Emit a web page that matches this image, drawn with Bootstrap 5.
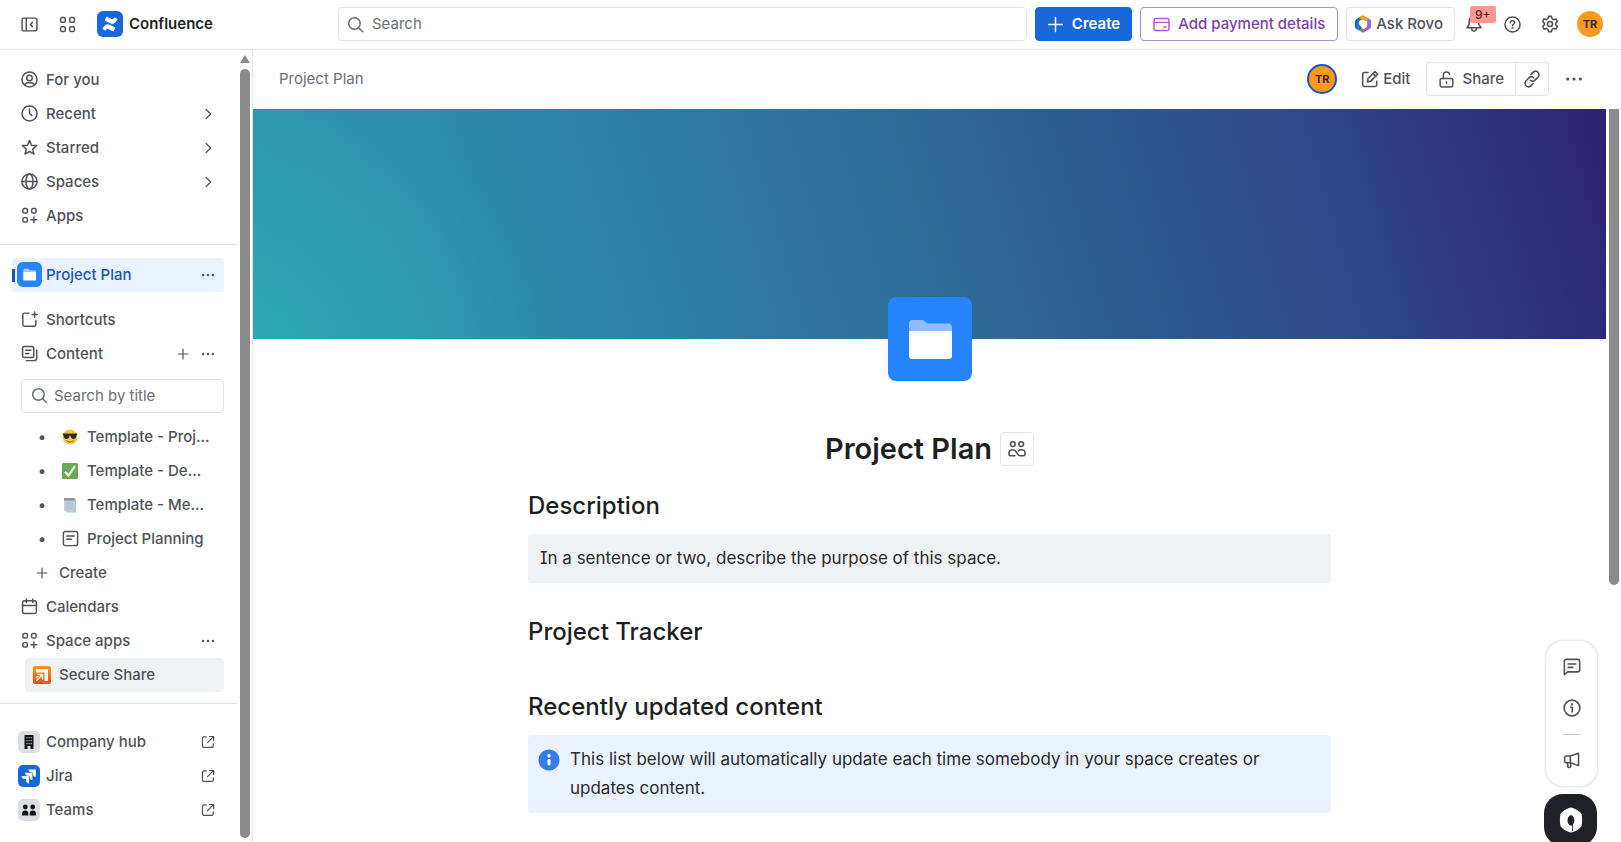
<!DOCTYPE html>
<html lang="en">
<head>
<meta charset="utf-8">
<meta name="viewport" content="width=device-width, initial-scale=1">
<title>Project Plan - Confluence</title>
<link href="https://cdn.jsdelivr.net/npm/bootstrap@5.3.0/dist/css/bootstrap.min.css" rel="stylesheet">
<style>
  :root { --ink: #292a2e; --subtle: #505258; --faint: #6b6e76; --line: #e3e4e7; --brand: #1868db; }
  body { font-family: Inter, "Liberation Sans", sans-serif; font-size: 15px; line-height: 20px; color: var(--ink); background: #fff; }
  a { color: inherit; text-decoration: none; }
  h1, h2 { color: #1e1f21; margin: 0; }
  h1 { font-size: 29px; line-height: 34px; font-weight: 600; }
  h2 { font-size: 24px; line-height: 32px; font-weight: 500; }
  .ico { width: 17px; height: 17px; flex: none; fill: none; stroke: currentColor; stroke-width: 1.4; stroke-linejoin: round; stroke-linecap: round; display: block; }
  .ico-sm { width: 14px; height: 14px; }
  .ico-xs { width: 12px; height: 12px; stroke-width: 1.6; }
  .ico-lg { width: 18px; height: 18px; }
  .tile { width: 22px; height: 22px; flex: none; display: block; }
  .plain-btn { border: 0; background: none; padding: 0; color: var(--subtle); display: inline-flex; align-items: center; justify-content: center; }

  .topbar { height: 50px; border-bottom: 1px solid var(--line); padding: 0 18px 0 21px; }
  .topbar-start { width: 317px; flex: none; }
  .topbar-icon { margin-right: 21px; }
  .brand-link { gap: 6px; color: #1e1f21; }
  .find { border: 1px solid var(--line); border-radius: 4px; height: 34px; color: var(--faint); }
  .find input { border: 0; outline: 0; background: none; min-width: 0; width: 100%; color: var(--ink); padding: 0; }
  .find input::placeholder { color: var(--faint); opacity: 1; }
  .tool-btn { height: 34px; border-radius: 4px; border: 1px solid var(--line); background: #fff; color: var(--subtle); font-weight: 500; font-size: 15px; line-height: 20px; padding: 0 12px; display: inline-flex; align-items: center; gap: 8px; white-space: nowrap; }
  .tool-btn:hover { background: #f4f5f7; }
  .create-btn, .create-btn:hover { background: var(--brand); border-color: var(--brand); color: #fff; padding: 0 11px; }
  .pay-btn { border-color: #b68bd0; color: #803fa5; }
  .pay-btn .ico { color: #af59e1; }
  .rovo-btn { padding: 0 11px 0 8px; gap: 5px; }
  .round-btn { width: 38px; height: 34px; }
  .person { border-radius: 50%; background: #fd9a1e; color: #292a2e; font-weight: 700; font-size: 11px; width: 26px; height: 26px; }
  .person-ring { width: 30px; height: 30px; border: 2px solid #1558bc; }
  .count { position: absolute; left: 15px; top: -1px; background: #fd9891; color: #5d1f1a; font-size: 12px; line-height: 17px; padding: 0 5px; border-radius: 2px; font-weight: 500; }

  .shell { height: 100vh; overflow: hidden; }
  .side { width: 253px; flex: none; border-right: 1px solid var(--line); }
  .side-list { padding: 13px 0 0; }
  .side-row { margin: 0 13px 0 12px; height: 34px; border-radius: 4px; color: var(--subtle); font-weight: 500; display: flex; align-items: center; padding-right: 4px; }
  .side-row > a { flex: 1; min-width: 0; height: 34px; display: flex; align-items: center; white-space: nowrap; }
  .child-row { margin-left: 25px; }
  .slot { width: 34px; flex: none; display: flex; justify-content: center; }
  .slot-sm { width: 22px; margin-right: 6px; flex: none; display: flex; justify-content: center; }
  .act { width: 25px; height: 25px; }
  .rule { height: 1px; background: var(--line); margin: 11px 0 13px; }
  .side-group { margin-top: 11px; }
  .current-row { position: relative; background: #e9f2fe; color: #1558bc; }
  .current-row::before { content: ""; position: absolute; left: 0; top: 11px; width: 3px; height: 13px; background: #1558bc; }
  .hover-row { background: #f0f1f2; }
  .side-find { margin: 8px 13px 7px 21px; padding: 0 8px 0 9px; gap: 6px; }

  .track { width: 15px; flex: none; display: flex; flex-direction: column; align-items: center; }
  .arrow-up { border: 5px solid transparent; border-top: 0; border-bottom: 8px solid #8b8b8b; margin: 5px 0 6px; }
  .thumb { width: 10px; border-radius: 5px; background: #8b8b8b; }
  .side-thumb { flex: 1; margin-bottom: 4px; }
  .main-thumb { height: 65%; border-radius: 0 0 5px 5px; }

  .subbar { height: 59px; padding: 0 38px 0 26px; color: var(--faint); }
  .share-main { border-radius: 4px 0 0 4px; padding: 0 11px; gap: 7px; }
  .share-link { border-radius: 0 4px 4px 0; border-left: 0; padding: 0 7px; }
  .hero { height: 230px; background: radial-gradient(ellipse 22% 105% at 0% 100%, rgba(45,172,184,.75) 0%, rgba(45,172,184,0) 100%), linear-gradient(74deg, #2d99b0 0%, #2e8fad 14%, #2c7da5 33%, #306b98 50%, #2c5d91 61%, #2f4a88 77%, #2f3480 90%, #2f2272 100%); }
  .space-icon { width: 84px; height: 84px; margin-top: -42px; }
  .page-col { max-width: 803px; margin: 0 auto; }
  .title-row { margin: 51px 0 24px; }
  .team-btn { width: 34px; height: 34px; border: 1px solid var(--line); border-radius: 4px; background: #fff; }
  .note { background: #f0f1f2; border-radius: 4px; margin: 12px 0 33px; padding: 10px 12px; font-size: 17px; line-height: 29px; font-feature-settings: "cv08"; }
  .note-info { background: #e9f2fe; gap: 10px; padding: 10px; }
  .gap-tracker { margin-bottom: 43px; }
  .dock { position: absolute; right: 24px; bottom: -4px; gap: 8px; }
  .dock-card { width: 51px; height: 145px; border-radius: 17px; background: #fff; box-shadow: 0 0 3px rgba(30,31,33,.28); padding: 5px 0; color: var(--subtle); }
  .dock-card .plain-btn { width: 40px; height: 42px; }
  .dock-rule { width: 17px; height: 1px; background: #c8cacf; margin: 5px 0; }
  .chat-btn { width: 53px; height: 52px; border-radius: 19px; background: #1f2126; border: 0; padding: 0; }
</style>
</head>
<body>
<svg class="d-none" aria-hidden="true">
  <symbol id="i-panel" viewBox="0 0 16 16"><rect x="1" y="2" width="14" height="12" rx="1.5"/><path d="M5 2v12M10.7 6 8.8 8l1.9 2"/></symbol>
  <symbol id="i-grid" viewBox="0 0 16 16"><rect x="1.5" y="1.5" width="4.4" height="4.4" rx="1.2"/><rect x="10.1" y="1.5" width="4.4" height="4.4" rx="1.2"/><rect x="1.5" y="10.1" width="4.4" height="4.4" rx="1.2"/><rect x="10.1" y="10.1" width="4.4" height="4.4" rx="1.2"/></symbol>
  <symbol id="i-apps" viewBox="0 0 16 16"><rect x="1.8" y="1.5" width="4.2" height="4.2" rx="1.2"/><rect x="10" y="1.5" width="4.2" height="4.2" rx="1.2"/><rect x="1.8" y="10" width="4.2" height="4.2" rx="1.2"/><path d="M12.1 9.3v5.6M9.3 12.1h5.6"/></symbol>
  <symbol id="i-search" viewBox="0 0 16 16"><circle cx="7" cy="7" r="5.4"/><path d="m11 11 3.800 3.800"/></symbol>
  <symbol id="i-plus" viewBox="0 0 16 16"><path d="M8 1.500v13M1.500 8h13"/></symbol>
  <symbol id="i-card" viewBox="0 0 16 16"><rect x="1" y="2.300" width="14" height="11.400" rx="1.600"/><path d="M1 6h14M10 10.400h2.300"/></symbol>
  <symbol id="i-bell" viewBox="0 0 16 16"><path d="M8 1.300c-2.600 0-4.300 1.900-4.300 4.300v2.700L1.700 11.400h12.600l-2-3.100V5.600C12.300 3.200 10.600 1.300 8 1.300ZM5.900 12c.2 1.400 1 2.300 2.100 2.300s1.900-.9 2.100-2.300"/></symbol>
  <symbol id="i-help" viewBox="0 0 16 16"><circle cx="8" cy="8" r="7.100"/><path d="M6 6.400C6 5.200 6.900 4.500 8 4.500s2 .7 2 1.800c0 1.300-2 1.500-2 2.900"/><circle cx="8" cy="11.400" r=".3"/></symbol>
  <symbol id="i-gear" viewBox="0 0 16 16"><circle cx="8" cy="8" r="2.200"/><path d="m6.700 1.200-.5 2-1.500.9-2-.6-1.300 2.300L2.900 7.200v1.600l-1.500 1.400 1.300 2.300 2-.6 1.500.9.500 2h2.600l.5-2 1.500-.9 2 .6 1.300-2.300-1.500-1.400V7.200l1.500-1.400-1.300-2.300-2 .6-1.500-.9-.5-2Z"/></symbol>
  <symbol id="i-user" viewBox="0 0 16 16"><circle cx="8" cy="8" r="7.100"/><circle cx="8" cy="6.500" r="2.600"/><path d="M3.500 13.200c.5-1.600 1.600-2.200 3-2.200h3c1.400 0 2.500.6 3 2.200"/></symbol>
  <symbol id="i-clock" viewBox="0 0 16 16"><circle cx="8" cy="8" r="7.100"/><path d="M8 3.800V8l2.300 2"/></symbol>
  <symbol id="i-star" viewBox="0 0 16 16"><path d="m8 1.300 1.800 4.500 4.900.4-3.700 3.200 1.200 4.800L8 11.600l-4.200 2.600L5 9.400 1.300 6.200l4.900-.4Z"/></symbol>
  <symbol id="i-globe" viewBox="0 0 16 16"><circle cx="8" cy="8" r="7.100"/><ellipse cx="8" cy="8" rx="3.300" ry="7.100"/><path d="M1 8h14"/></symbol>
  <symbol id="i-chev" viewBox="0 0 16 16"><path d="m5.500 2 6 6-6 6"/></symbol>
  <symbol id="i-dots" viewBox="0 0 16 16"><g fill="currentColor" stroke="none"><circle cx="2.400" cy="8" r="1.400"/><circle cx="8" cy="8" r="1.400"/><circle cx="13.600" cy="8" r="1.400"/></g></symbol>
  <symbol id="i-shortcut" viewBox="0 0 16 16"><path d="M7.500 2H3.200C2.300 2 1.700 2.600 1.700 3.500v9.300c0 .9.600 1.500 1.500 1.500h9.300c.9 0 1.500-.6 1.500-1.500V9M12.800.9v5M10.300 3.400h5"/></symbol>
  <symbol id="i-content" viewBox="0 0 16 16"><rect x="1.500" y="1.300" width="10.500" height="10.500" rx="1.500"/><path d="M4.300 5h5M4.300 8h3M14.800 4.800v7.500c0 1.400-1 2.400-2.400 2.400H5"/></symbol>
  <symbol id="i-page" viewBox="0 0 16 16"><rect x="1.300" y="1.300" width="13.400" height="13.400" rx="1.800"/><path d="M4.500 5.600h7M4.500 8.800h4.300"/></symbol>
  <symbol id="i-cal" viewBox="0 0 16 16"><rect x="1.500" y="2.600" width="13" height="12" rx="1.600"/><path d="M1.500 7h13M5 .9v3.400M11 .9v3.400"/></symbol>
  <symbol id="i-out" viewBox="0 0 16 16"><path d="M6 2.200H3.200c-.9 0-1.500.6-1.500 1.500v9c0 .9.600 1.500 1.500 1.500h9.300c.9 0 1.500-.6 1.500-1.500V10M9.800 1.700h4.700v4.700M14.300 1.900 7.500 8.700"/></symbol>
  <symbol id="i-edit" viewBox="0 0 16 16"><path d="M6.200 2.200H3c-.9 0-1.500.6-1.500 1.500v9.500c0 .9.600 1.500 1.500 1.500h9.500c.9 0 1.500-.6 1.500-1.500V10M5.700 10.500l.6-3 6.100-6.100 2.400 2.400-6.100 6.100ZM10.800 3.200l2.200 2.200"/></symbol>
  <symbol id="i-lock" viewBox="0 0 16 16"><rect x="2" y="7" width="12" height="8" rx="1.500"/><path d="M5 7V4.300C5 2.300 6.300 1 8 1c1.500 0 2.600.8 3 2.200M8 10.200v1.600"/></symbol>
  <symbol id="i-link" viewBox="0 0 16 16"><path d="m7 4 1.900-1.900c1.300-1.300 3.200-1.300 4.400-.1s1.200 3.200 0 4.400l-2.600 2.600c-1.200 1.200-3 1.200-4.200.1M9 12l-1.900 1.900c-1.300 1.300-3.200 1.300-4.400.1s-1.200-3.200 0-4.400l2.600-2.600c1.200-1.200 3-1.200 4.200-.1"/></symbol>
  <symbol id="i-team" viewBox="0 0 16 16"><circle cx="4.300" cy="3.600" r="2.100"/><circle cx="11.700" cy="3.600" r="2.100"/><path d="M6 14H2.200c-.8 0-1.300-.5-1.300-1.300v-1.200C.9 9.800 2.100 8.700 4 8.700c1.700 0 2.600.7 3.400 2l1 1.700c.6 1 1.200 1.600 2.400 1.600h3c.8 0 1.300-.5 1.300-1.300v-1.200c0-1.700-1.200-2.800-3.100-2.800-1.100 0-1.900.3-2.500.9"/></symbol>
  <symbol id="i-comment" viewBox="0 0 16 16"><path d="M1.200 14.900V2.700c0-.9.600-1.500 1.500-1.500h10.600c.9 0 1.500.6 1.500 1.500v8.100c0 .9-.6 1.500-1.500 1.500H4.200ZM4.500 5.300h7M4.500 8.300h4.200"/></symbol>
  <symbol id="i-info" viewBox="0 0 16 16"><circle cx="8" cy="8" r="7"/><path d="M7 7.300h1.200v4.200"/><circle cx="8" cy="4.800" r=".4"/></symbol>
  <symbol id="i-horn" viewBox="0 0 16 16"><path d="M6.500 4.500 13.800 2v11l-7.300-2.500H3c-.9 0-1.500-.6-1.500-1.500V6c0-.9.600-1.500 1.500-1.500ZM6.500 4.500v6M4.200 10.500v3.300c0 .5.300.9.900.9h.8c.5 0 .9-.4.900-.9v-3.200"/></symbol>
</svg>

<div class="shell d-flex flex-column">
  <header class="topbar d-flex align-items-center">
    <div class="topbar-start d-flex align-items-center">
      <button class="plain-btn topbar-icon" aria-label="Collapse sidebar"><svg class="ico"><use href="#i-panel"/></svg></button>
      <button class="plain-btn topbar-icon" aria-label="Switch apps"><svg class="ico"><use href="#i-grid"/></svg></button>
      <a href="#" class="brand-link d-flex align-items-center fw-semibold">
        <svg width="26" height="26" viewBox="0 0 26 26"><rect width="26" height="26" rx="6" fill="#1868db"/><g fill="#fff"><path d="M6.300 17.300c2.200-3.600 4.400-3.600 7-2.200l5.200 2.500-1.700 3.300c-.2.400-.6.500-1 .3l-4.700-2.200c-.8-.4-1.300-.3-1.700.4l-.6.800c-.2.300-.6.400-.9.200l-2.100-1.400c-.3-.2-.4-.5-.2-.8Z" transform="translate(0 -1)"/><path d="M19.700 8.700c-2.200 3.600-4.400 3.600-7 2.200L7.500 8.400l1.700-3.300c.2-.4.600-.5 1-.3l4.700 2.200c.8.400 1.300.3 1.700-.4l.6-.8c.2-.3.600-.4.900-.2l2.100 1.400c.3.200.4.500.2.800Z" transform="translate(0 1)"/></g></svg>
        <span>Confluence</span>
      </a>
    </div>
    <label class="find d-flex align-items-center flex-grow-1 gap-2 ps-2 me-2">
      <svg class="ico"><use href="#i-search"/></svg>
      <input type="search" placeholder="Search" aria-label="Search">
    </label>
    <div class="d-flex align-items-center gap-2 flex-shrink-0">
      <button class="tool-btn create-btn fw-semibold"><svg class="ico"><use href="#i-plus"/></svg>Create</button>
      <button class="tool-btn pay-btn"><svg class="ico"><use href="#i-card"/></svg>Add payment details</button>
      <button class="tool-btn rovo-btn">
        <svg width="16" height="18" viewBox="0 0 16 18"><path d="M7.300.6 1.500 4C.6 4.500 0 5.400 0 6.400v5.200c0 1 .6 1.900 1.500 2.400l2.300 1.300V7.500c0-.9.500-1.600 1.200-2L8.500 3.300V1.200Z" fill="#1868db"/><path d="M3.800 2.700 7.300.6a1.500 1.500 0 0 1 1.400 0l3.500 2.100v3.600L8.500 5.500 6.500 4.200Z" fill="#fca700"/><path d="M12.200 2.700v7.800c0 .9-.5 1.600-1.200 2L7.500 14.700v2.100l1.200.6 5.800-3.400c.9-.5 1.500-1.400 1.500-2.400V6.400c0-1-.6-1.900-1.500-2.400Z" fill="#af59e1"/><path d="M3.800 15.300 7.300 17.400c.5.200 1 .2 1.400 0v-2.700L6.500 12.200 3.800 12Z" fill="#6a9a23"/><path d="M1 13.700 3.800 15.300V9L6 12v2L3.800 15Z" fill="#1868db"/><path d="M6 6.300c0-.8.500-1.300 1.200-1.300L10 6.300v5.400c0 .8-.5 1.300-1.200 1.300L6 11.700Z" fill="#fff"/></svg>
        Ask Rovo</button>
    </div>
    <div class="d-flex align-items-center flex-shrink-0">
      <button class="plain-btn round-btn position-relative" aria-label="Notifications"><svg class="ico ico-lg"><use href="#i-bell"/></svg><span class="count">9+</span></button>
      <button class="plain-btn round-btn" aria-label="Help"><svg class="ico"><use href="#i-help"/></svg></button>
      <button class="plain-btn round-btn" aria-label="Settings"><svg class="ico ico-lg"><use href="#i-gear"/></svg></button>
      <button class="plain-btn person ms-2" aria-label="Your profile">TR</button>
    </div>
  </header>

  <div class="d-flex flex-grow-1 overflow-hidden">
    <aside class="side d-flex">
      <nav class="side-list flex-grow-1" aria-label="Space">
        <div class="side-row"><a href="#"><span class="slot"><svg class="ico"><use href="#i-user"/></svg></span>For you</a></div>
        <div class="side-row"><a href="#"><span class="slot"><svg class="ico"><use href="#i-clock"/></svg></span>Recent</a><button class="plain-btn act" aria-label="Open recent"><svg class="ico ico-xs"><use href="#i-chev"/></svg></button></div>
        <div class="side-row"><a href="#"><span class="slot"><svg class="ico"><use href="#i-star"/></svg></span>Starred</a><button class="plain-btn act" aria-label="Open starred"><svg class="ico ico-xs"><use href="#i-chev"/></svg></button></div>
        <div class="side-row"><a href="#"><span class="slot"><svg class="ico"><use href="#i-globe"/></svg></span>Spaces</a><button class="plain-btn act" aria-label="Open spaces"><svg class="ico ico-xs"><use href="#i-chev"/></svg></button></div>
        <div class="side-row"><a href="#"><span class="slot"><svg class="ico"><use href="#i-apps"/></svg></span>Apps</a></div>
        <div class="rule"></div>
        <div class="side-row current-row"><a href="#" aria-current="page"><span class="slot"><svg width="25" height="25" viewBox="0 0 84 84"><rect width="84" height="84" rx="20" fill="#2684ff"/><path d="M21 29c0-4 2-6 5-6h12l5 5h16c3 0 5 2 5 5H21Z" fill="#a4c8ff"/><path d="M21 33h43v25c0 3-1 4-4 4H25c-3 0-4-1-4-4Z" fill="#fff"/></svg></span>Project Plan</a><button class="plain-btn act" aria-label="Space actions"><svg class="ico ico-sm"><use href="#i-dots"/></svg></button></div>
        <div class="side-group">
          <div class="side-row"><a href="#"><span class="slot"><svg class="ico"><use href="#i-shortcut"/></svg></span>Shortcuts</a></div>
          <div class="side-row"><a href="#"><span class="slot"><svg class="ico"><use href="#i-content"/></svg></span>Content</a><button class="plain-btn act" aria-label="Add content"><svg class="ico ico-xs"><use href="#i-plus"/></svg></button><button class="plain-btn act" aria-label="Content actions"><svg class="ico ico-sm"><use href="#i-dots"/></svg></button></div>
        </div>
        <label class="find side-find d-flex align-items-center"><svg class="ico"><use href="#i-search"/></svg><input type="text" placeholder="Search by title" aria-label="Search by title"></label>
        <div class="side-row child-row"><a href="#"><span class="slot">•</span><span class="slot-sm"><svg width="16" height="16" viewBox="0 0 16 16"><circle cx="8" cy="8" r="7.500" fill="#fcc837"/><path d="M.8 4.500h14.400v1.300l-.7.500c-.1 2.400-1 3.700-3 3.700-1.800 0-2.700-1.200-3-3.200h-1c-.3 2-1.200 3.200-3 3.200-2 0-2.900-1.300-3-3.700l-.7-.5Z" fill="#2b2a2c"/><path d="M4.500 11.500c2 2 5 2 7 0" fill="none" stroke="#6b4a12" stroke-width="1"/></svg></span>Template - Proj...</a></div>
        <div class="side-row child-row"><a href="#"><span class="slot">•</span><span class="slot-sm"><svg width="16" height="16" viewBox="0 0 16 16"><rect width="16" height="16" rx="1.500" fill="#6bab4f"/><path d="m3 8.500 3.300 4L13 3.200" fill="none" stroke="#fff" stroke-width="2"/></svg></span>Template - De...</a></div>
        <div class="side-row child-row"><a href="#"><span class="slot">•</span><span class="slot-sm"><svg width="16" height="16" viewBox="0 0 16 16"><path d="M4 2h10v13.500H4Z" fill="#a3c8e8"/><path d="M2 1h10.500v12l-1.500 1.500H2Z" fill="#c3d0dc"/><path d="M2 1h10.500v2.600H2Z" fill="#8a939c"/><path d="M3.500 6h7.500M3.500 8h7.500M3.500 10h7.500M3.500 12h7.500" stroke="#9fb1c2" stroke-width=".7"/></svg></span>Template - Me...</a></div>
        <div class="side-row child-row"><a href="#"><span class="slot">•</span><span class="slot-sm"><svg class="ico"><use href="#i-page"/></svg></span>Project Planning</a></div>
        <div class="side-row child-row"><a href="#"><span class="slot"><svg class="ico ico-xs"><use href="#i-plus"/></svg></span>Create</a></div>
        <div class="side-row"><a href="#"><span class="slot"><svg class="ico"><use href="#i-cal"/></svg></span>Calendars</a></div>
        <div class="side-row"><a href="#"><span class="slot"><svg class="ico"><use href="#i-apps"/></svg></span>Space apps</a><button class="plain-btn act" aria-label="Space app actions"><svg class="ico ico-sm"><use href="#i-dots"/></svg></button></div>
        <div class="side-row child-row hover-row"><a href="#"><span class="slot"><svg width="18" height="18" viewBox="0 0 18 18"><defs><linearGradient id="flame" x1="0" y1="0" x2="0" y2="1"><stop offset="0" stop-color="#f79a1c"/><stop offset="1" stop-color="#e2511a"/></linearGradient></defs><rect width="18" height="18" rx="2" fill="url(#flame)"/><path d="M3 3h12v12h-3.500V6.500H3Z" fill="#fff"/><path d="M4.500 8.500h5v5M9.300 8.700l-6 6M3 11.500l2-1.200" fill="none" stroke="#fff" stroke-width="1.300"/></svg></span>Secure Share</a></div>
        <div class="rule"></div>
        <div class="pt-2">
          <div class="side-row"><a href="#"><span class="slot"><svg class="tile" viewBox="0 0 22 22"><rect width="22" height="22" rx="5" fill="#dddee1"/><path d="M6.500 4h9v14h-3v-3h-3v3h-3Z" fill="#101214"/><path d="M8.300 6h1.300v1.300H8.300zM10.500 6h1.300v1.300h-1.300zM12.700 6H14v1.300h-1.300zM8.300 9h1.300v1.300H8.300zM10.500 9h1.300v1.300h-1.300zM12.700 9H14v1.300h-1.300zM8.300 12h1.300v1.300H8.300zM10.500 12h1.300v1.300h-1.300zM12.700 12H14v1.300h-1.300z" fill="#a9abaf"/></svg></span>Company hub</a><span class="plain-btn act"><svg class="ico ico-sm"><use href="#i-out"/></svg></span></div>
          <div class="side-row"><a href="#"><span class="slot"><svg class="tile" viewBox="0 0 22 22"><rect width="22" height="22" rx="5" fill="#1868db"/><g fill="#fff"><path id="jr" d="M10.500 4.500h7.300v7.300c-1.800 0-2.900-1.200-2.900-2.900V7.400h-1.500c-1.700 0-2.900-1.100-2.900-2.900Z"/><use href="#jr" x="-3.400" y="3.300"/><use href="#jr" x="-6.800" y="6.600"/></g></svg></span>Jira</a><span class="plain-btn act"><svg class="ico ico-sm"><use href="#i-out"/></svg></span></div>
          <div class="side-row"><a href="#"><span class="slot"><svg class="tile" viewBox="0 0 22 22"><rect width="22" height="22" rx="5" fill="#dddee1"/><g fill="#101214"><circle cx="7.300" cy="8" r="2.400"/><circle cx="14.700" cy="8" r="2.400"/><path d="M4 16.500v-2c0-1.700 1.300-3 3.300-3s3 1.300 3 3v2ZM11.700 16.500v-2c0-1.700 1-3 3-3s3.300 1.300 3.300 3v2Z"/></g></svg></span>Teams</a><span class="plain-btn act"><svg class="ico ico-sm"><use href="#i-out"/></svg></span></div>
        </div>
      </nav>
      <div class="track" aria-hidden="true"><div class="arrow-up"></div><div class="thumb side-thumb"></div></div>
    </aside>

    <main class="flex-grow-1 d-flex flex-column position-relative overflow-hidden">
      <div class="subbar d-flex align-items-center justify-content-between flex-shrink-0">
        <a href="#">Project Plan</a>
        <div class="d-flex align-items-center">
          <button class="plain-btn person person-ring me-2" aria-label="Page owner">TR</button>
          <button class="tool-btn border-0 gap-1 ps-3 me-1"><svg class="ico ico-lg"><use href="#i-edit"/></svg>Edit</button>
          <button class="tool-btn share-main"><svg class="ico"><use href="#i-lock"/></svg>Share</button>
          <button class="tool-btn share-link me-3" aria-label="Copy link"><svg class="ico ico-lg"><use href="#i-link"/></svg></button>
          <button class="plain-btn" aria-label="More actions"><svg class="ico ico-lg"><use href="#i-dots"/></svg></button>
        </div>
      </div>
      <div class="d-flex flex-grow-1 overflow-hidden">
        <article class="flex-grow-1">
          <div class="hero"></div>
          <div class="page-col">
            <svg class="space-icon d-block mx-auto position-relative" viewBox="0 0 84 84"><rect width="84" height="84" rx="8" fill="#2684ff"/><path d="M21 27c0-2.500 1-4 3.500-4H34c3 0 3.500 3.500 7 3.500h19.500c2.500 0 3.500 1.500 3.500 3.500v5H21Z" fill="#8fbcff"/><path d="M21 34h43v25c0 2-1 3-3 3H24c-2 0-3-1-3-3Z" fill="#fff"/></svg>
            <div class="title-row d-flex align-items-center justify-content-center gap-2">
              <h1>Project Plan</h1>
              <button class="plain-btn team-btn" aria-label="Space members"><svg class="ico ico-lg"><use href="#i-team"/></svg></button>
            </div>
            <h2>Description</h2>
            <div class="note">In a sentence or two, describe the purpose of this space.</div>
            <h2 class="gap-tracker">Project Tracker</h2>
            <h2>Recently updated content</h2>
            <div class="note note-info d-flex">
              <svg class="flex-shrink-0 mt-1" width="22" height="22" viewBox="0 0 22 22"><circle cx="11" cy="11" r="10.500" fill="#357de8"/><circle cx="11" cy="6.700" r="1.700" fill="#fff"/><rect x="9.500" y="9.800" width="3" height="6.600" rx="1.500" fill="#fff"/></svg>
              <div class="pe-5">This list below will automatically update each time somebody in your space creates or updates content.</div>
            </div>
          </div>
        </article>
        <div class="track" aria-hidden="true"><div class="thumb main-thumb"></div></div>
      </div>
      <div class="dock d-flex flex-column align-items-end">
        <div class="dock-card d-flex flex-column align-items-center">
          <button class="plain-btn" aria-label="Comments"><svg class="ico ico-lg"><use href="#i-comment"/></svg></button>
          <button class="plain-btn" aria-label="Details"><svg class="ico ico-lg"><use href="#i-info"/></svg></button>
          <div class="dock-rule"></div>
          <button class="plain-btn" aria-label="Give feedback"><svg class="ico ico-lg"><use href="#i-horn"/></svg></button>
        </div>
        <button class="chat-btn" aria-label="Open assistant"><svg width="26" height="26" viewBox="0 0 26 26"><path d="M13 1c2 0 8 3.400 9.500 5 1.500 1.700 1.500 12 0 14-1.500 1.800-7 5-9.500 5s-8-3.200-9.500-5C2 18 2 7.700 3.500 6 5 4.400 11 1 13 1Z" fill="#fff" stroke="#fff" stroke-width="1" stroke-linejoin="round"/><path d="M13 8c2.200.6 3.300 2.800 3.300 5.200 0 1.600-.4 3-1.300 4V24h-.8v-5.600c-2.600.6-4.700-2-4.700-5C9.500 10.800 10.800 8.500 13 8Z" fill="#1f2126"/></svg></button>
      </div>
    </main>
  </div>
</div>
<script src="https://cdn.jsdelivr.net/npm/bootstrap@5.3.0/dist/js/bootstrap.bundle.min.js"></script>
</body>
</html>
